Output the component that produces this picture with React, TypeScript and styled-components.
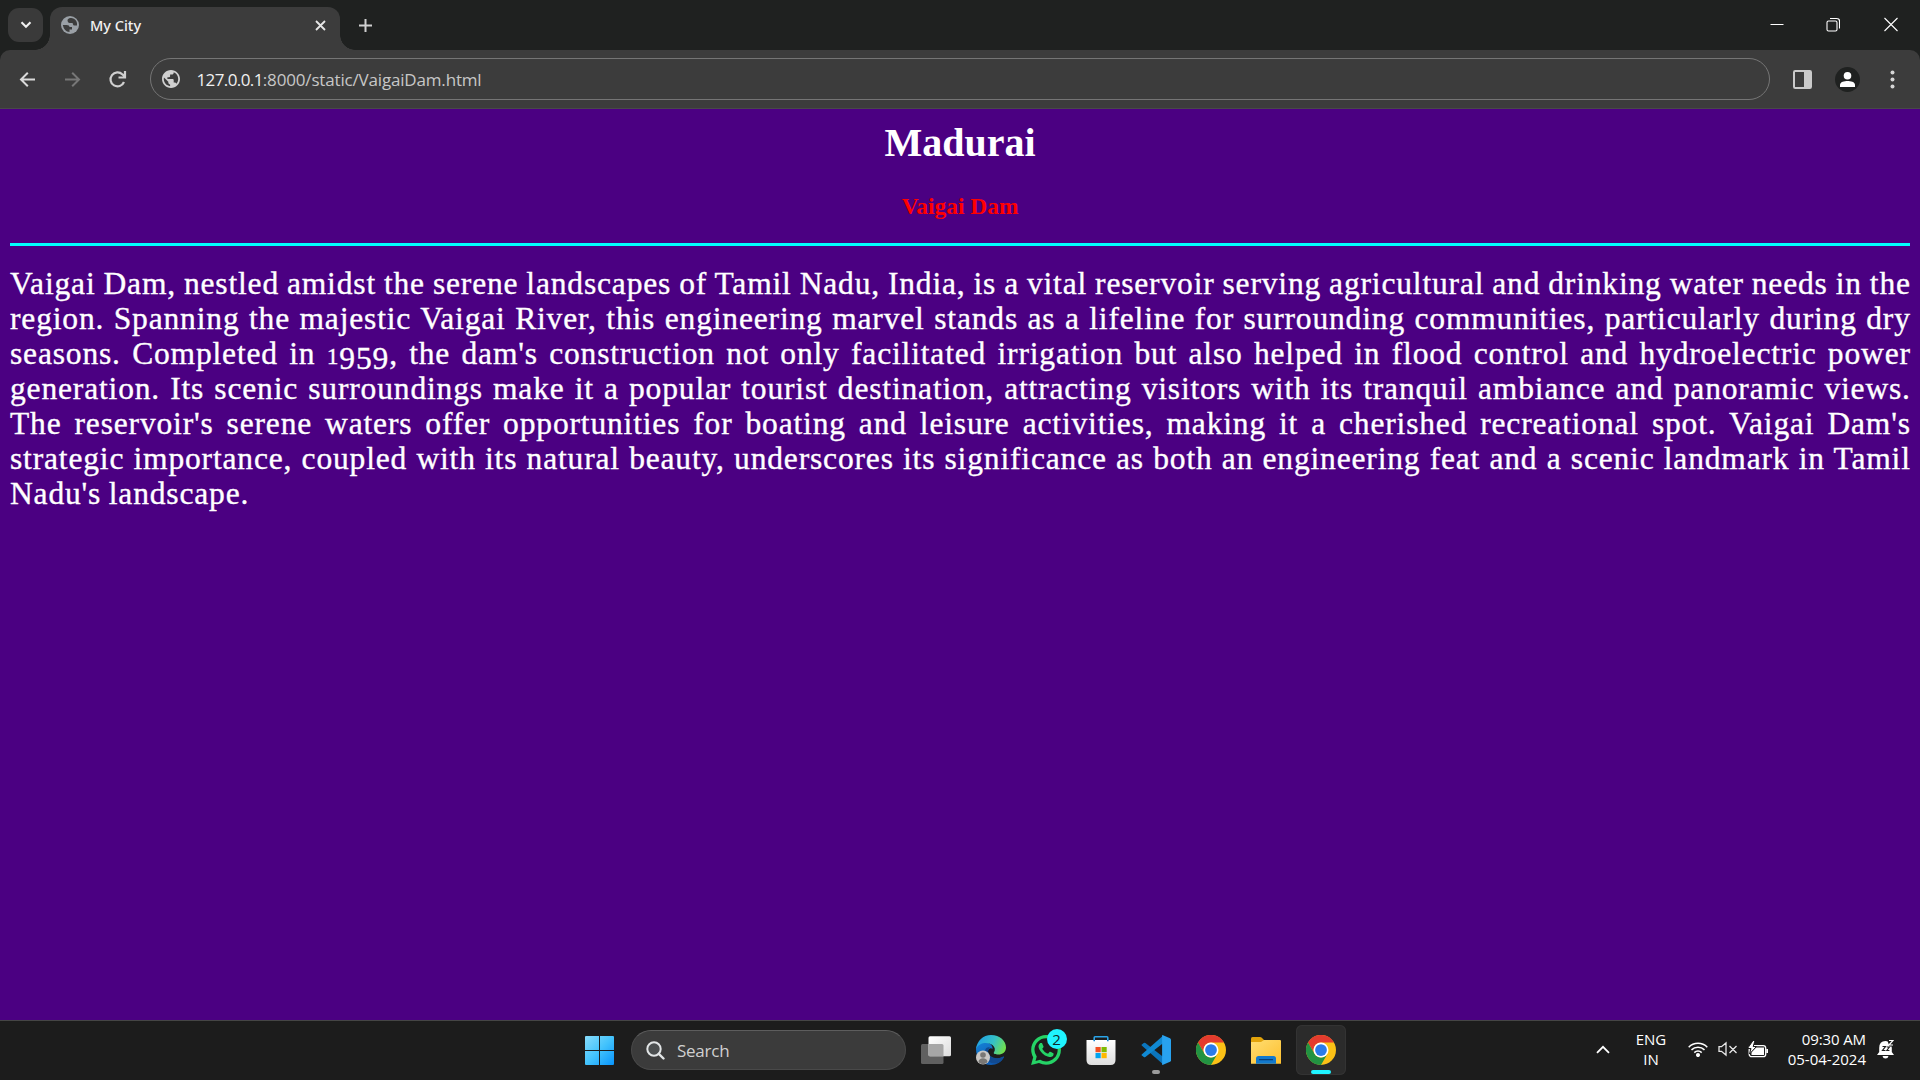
import React from "react";
import styled, { createGlobalStyle, css } from "styled-components";

const uiFont = `"Open Sans", "Noto Sans", sans-serif`;

const Global = createGlobalStyle`
  html, body { margin: 0; padding: 0; background: #4b0082; }
  * { box-sizing: border-box; }
`;

const Screen = styled.div`
  width: 1920px;
  height: 1080px;
  overflow: hidden;
  display: flex;
  flex-direction: column;
  background: #4b0082;
  font-family: ${uiFont};
  svg { display: block; flex: none; }
`;

/* ---------- Browser chrome ---------- */
const TabStrip = styled.header`
  height: 50px;
  flex: none;
  display: flex;
  background: #1f2120;
`;

const TabSearch = styled.button`
  width: 35px;
  height: 34px;
  margin: 8px 7px 0 8px;
  padding: 0;
  border: 0;
  border-radius: 11px;
  background: #3a3a3a;
  display: grid;
  place-items: center;
`;

const Tab = styled.div`
  position: relative;
  width: 290px;
  height: 43px;
  margin-top: 7px;
  padding: 0 12px 7px 11px;
  border-radius: 12px 12px 0 0;
  background: #3c3c3c;
  display: flex;
  align-items: center;
  color: #f2f2f2;
  &::before, &::after {
    content: "";
    position: absolute;
    bottom: 0;
    width: 15px;
    height: 15px;
  }
  &::before { left: -15px; background: radial-gradient(circle at 0 0, transparent 14.5px, #3c3c3c 15px); }
  &::after { right: -15px; background: radial-gradient(circle at 100% 0, transparent 14.5px, #3c3c3c 15px); }
`;

const TabTitle = styled.span`
  flex: 1;
  margin-left: 11px;
  font-family: "Noto Sans", "Open Sans", sans-serif;
  font-size: 14.5px;
  line-height: 20px;
  font-weight: 500;
`;

const NewTab = styled.div`
  width: 50px;
  display: grid;
  place-items: center;
`;

const Caption = styled.div`
  margin-left: auto;
  display: flex;
`;

const CaptionButton = styled.div<{ $w: number }>`
  width: ${(p) => p.$w}px;
  padding-top: 17px;
`;

const ToolbarBack = styled.div`
  flex: none;
  background: #1f2120;
`;

const Toolbar = styled.nav`
  height: 59px;
  border-bottom: 1px solid #494949;
  border-radius: 10px 10px 0 0;
  background: #3c3c3c;
  display: flex;
  align-items: center;
  padding: 1px 18px 0 15px;
`;

const NavIcons = styled.div`
  display: flex;
  gap: 20px;
  width: 135px;
`;

const Omnibox = styled.div`
  width: 1620px;
  height: 42px;
  border: 1px solid #757575;
  border-radius: 21px;
  display: flex;
  align-items: center;
  padding-left: 11px;
  margin-bottom: 1px;
`;

const Url = styled.span`
  margin: 2px 0 0 16.5px;
  font-size: 17px;
  line-height: 24px;
  letter-spacing: -0.17px;
  color: #c7c7c7;
  white-space: nowrap;
  b { font-weight: 400; letter-spacing: -0.6px; color: #f0f0f0; }
`;

const ToolbarRight = styled.div`
  margin-left: auto;
  display: flex;
  align-items: center;
`;

const Avatar = styled.div`
  width: 25px;
  height: 25px;
  margin: 0 27px 0 23px;
  border-radius: 50%;
  background: #1f2120;
  overflow: hidden;
`;

/* ---------- Page ---------- */
const Page = styled.main`
  flex: 1;
  padding: 0 10px;
  font-family: "Liberation Serif", serif;
  color: #fff;
`;

const City = styled.h1`
  margin: 11px 0 0;
  font-size: 40px;
  line-height: 46px;
  text-align: center;
`;

const Place = styled.h3`
  margin: 27px 0 0;
  font-size: 23.4px;
  line-height: 27px;
  text-align: center;
  color: #ff0000;
`;

const Rule = styled.hr`
  height: 3px;
  margin: 23px 0 20px;
  border: 0;
  background: #00ffff;
`;

const Story = styled.p`
  margin: 0;
  font-size: 31.5px;
  line-height: 35px;
  letter-spacing: 0.84px;
  word-spacing: -1.2px;
  -webkit-text-stroke: 0.35px #fff;
`;

const Line = styled.span<{ $last?: boolean }>`
  display: block;
  height: 35px;
  white-space: nowrap;
  margin-right: -0.8px;
  text-align: justify;
  text-align-last: ${(p) => (p.$last ? "left" : "justify")};
`;

/* Old-style figures: "1" at x-height, the others hanging below the baseline */
const SmallFigure = styled.span`
  font-size: 23.5px;
  line-height: 0;
`;

const HangingFigure = styled.span`
  line-height: 0;
  vertical-align: -4.5px;
`;

/* ---------- Taskbar ---------- */
const Taskbar = styled.footer`
  height: 60px;
  flex: none;
  border-top: 1px solid #454545;
  background: #1c1c1c;
  display: flex;
  align-items: center;
  padding: 0 26px 1px 585px;
  color: #fff;
`;

const SearchBox = styled.div`
  width: 275px;
  height: 40px;
  margin: 0 2px 0 17px;
  border-radius: 20px;
  border: 1px solid #494949;
  border-top-color: #5d5d5d;
  background: #3b3b3b;
  display: flex;
  align-items: center;
  padding-left: 14px;
  gap: 12px;
  font-size: 17px;
  line-height: 24px;
  color: #d0d0d0;
  letter-spacing: -0.25px;
`;

const SearchLabel = styled.span`
  padding-top: 1px;
`;

const TaskButton = styled.div<{ $active?: boolean }>`
  position: relative;
  width: 50px;
  height: 50px;
  margin: 0 2.5px;
  border-radius: 6px;
  display: grid;
  place-items: center;
  ${(p) => p.$active && css`background: #2b2b2b; box-shadow: inset 0 0 0 1px #333;`}
`;

const Marker = styled.i<{ $w: number; $c: string }>`
  position: absolute;
  bottom: 1px;
  left: calc(50% - ${(p) => p.$w / 2}px);
  width: ${(p) => p.$w}px;
  height: 4px;
  border-radius: 2px;
  background: ${(p) => p.$c};
`;

const Badge = styled.span`
  position: absolute;
  left: 26px;
  top: 4px;
  width: 20px;
  height: 20px;
  border-radius: 50%;
  background: #1ff4ff;
  color: #10282a;
  font-size: 15px;
  line-height: 20px;
  text-align: center;
`;

const Tray = styled.div`
  margin-left: auto;
  padding-bottom: 2px;
  display: flex;
  align-items: center;
`;

const Stack = styled.div<{ $w: number; $align: string }>`
  width: ${(p) => p.$w}px;
  text-align: ${(p) => p.$align};
  font-size: 15px;
  line-height: 20px;
  white-space: nowrap;
`;

const Clock = styled.div`
  letter-spacing: -0.1px;
`;

const Space = styled.div<{ $w: number }>`
  width: ${(p) => p.$w}px;
`;

/* ---------- Icons ---------- */
const Globe = () => (
  <svg width="18" height="18" viewBox="2 2 20 20" fill="#d0d0d0">
    <path d="M12 2C6.48 2 2 6.48 2 12s4.48 10 10 10 10-4.48 10-10S17.52 2 12 2zm-1 17.93c-3.95-.49-7-3.85-7-7.93 0-.62.08-1.21.21-1.79L9 15v1c0 1.1.9 2 2 2v1.93zm6.9-2.54c-.26-.81-1-1.39-1.9-1.39h-1v-3c0-.55-.45-1-1-1H8v-2h2c.55 0 1-.45 1-1V7h2c1.1 0 2-.9 2-2v-.41c2.93 1.19 5 4.06 5 7.41 0 2.08-.8 3.97-2.1 5.39z" />
  </svg>
);

const Favicon = () => (
  <svg width="18" height="18" viewBox="0 0 18 18">
    <circle cx="9" cy="9" r="9" fill="#9aa0a6" />
    <path d="M9.500 2Q6.500 2.500 6.500 4.500T8.500 7H11q1 0 1 1.200T13.500 9.500H16Q16.500 5 13 2.800Q11 1.700 9.500 2ZM1.800 9H5.500Q8.500 9 8.500 11H11v2.500H8.500V16Q3 15.500 1.800 9Z" fill="#3c3c3c" />
  </svg>
);

const Arrow = ({ color, flip }: { color: string; flip?: boolean }) => (
  <svg width="25" height="25" viewBox="0 0 25 25" fill="none" stroke={color} strokeWidth="2">
    <g transform={flip ? "translate(25 0) scale(-1 1)" : undefined}>
      <path d="M20 12.5H6.500M12.800 5.700 6 12.500l6.800 6.800" />
    </g>
  </svg>
);

const Chrome = () => (
  <svg width="30" height="30" viewBox="0 0 48 48">
    <circle cx="24" cy="24" r="24" fill="#fbc116" />
    <path d="M3.2 12A24 24 0 0 1 44.8 12H24a12 12 0 0 0-10.4 18Z" fill="#e33b2e" />
    <path d="M3.2 12A24 24 0 0 0 24 48l10.4-18A12 12 0 0 1 13.6 30Z" fill="#229342" />
    <circle cx="24" cy="24" r="12" fill="#fff" />
    <circle cx="24" cy="24" r="9.4" fill="#2a7bea" />
  </svg>
);

const Edge = () => (
  <svg width="30" height="30" viewBox="0 0 30 30">
    <defs>
      <linearGradient id="eTop" x1="0" y1="0.3" x2="1" y2="0.6">
        <stop offset="0" stopColor="#1f9fe6" />
        <stop offset="0.55" stopColor="#35c1c6" />
        <stop offset="1" stopColor="#72e04b" />
      </linearGradient>
      <linearGradient id="eLow" x1="0" y1="0" x2="0.7" y2="1">
        <stop offset="0" stopColor="#1583d8" />
        <stop offset="1" stopColor="#0d55ad" />
      </linearGradient>
    </defs>
    <path d="M0 14C1 8 6 6 11 7.500c4 1 6 4 5.500 6.500-1-1.500-4-1-4.500 2-.5 4 4 7.500 9 7.500 3 0 5-1.500 6.500-2 .5 0 .5.500.3 1C25.500 27 20.500 30 15 30 6 30 0 23 0 14Z" fill="url(#eLow)" />
    <path d="M9.500 14q-2.500 8 3 12.500 4 2.700 9.500 1.500 4-2 5.700-5.500.2-1-.7-.8C21 25 13 22.500 12 17q-.3-3 2-4.500-3-1-4.500 1.500Z" fill="#114a91" />
    <path d="M0 14C1 6 7 0 15 0c9 0 15 6 15 12.500 0 4.500-3.500 7-7.500 7-3.500 0-5.500-1-4.500-2.300 1.500-2.200 1-5.200-1.500-7.200C12 6.500 3 7 0 14Z" fill="url(#eTop)" />
    <circle cx="7" cy="22.500" r="7" fill="#c9c7c5" />
    <circle cx="7" cy="20" r="2.800" fill="#797775" />
    <path d="M2.500 27c0-5 9-5 9 0-2.500 2.800-6.500 2.800-9 0Z" fill="#797775" />
  </svg>
);

const WhatsApp = () => (
  <svg width="30" height="30" viewBox="0 0 24 24" fill="#25d366">
    <path d="M17.472 14.382c-.297-.149-1.758-.867-2.030-.967-.273-.099-.471-.148-.67.150-.197.297-.767.966-.940 1.164-.173.199-.347.223-.644.075-.297-.150-1.255-.463-2.390-1.475-.883-.788-1.480-1.761-1.653-2.059-.173-.297-.018-.458.130-.606.134-.133.298-.347.446-.520.149-.174.198-.298.298-.497.099-.198.050-.371-.025-.520-.075-.149-.669-1.612-.916-2.207-.242-.579-.487-.500-.669-.510-.173-.008-.371-.010-.570-.010-.198 0-.520.074-.792.372-.272.297-1.040 1.016-1.040 2.479 0 1.462 1.065 2.875 1.213 3.074.149.198 2.096 3.200 5.077 4.487.709.306 1.262.489 1.694.625.712.227 1.360.195 1.871.118.571-.085 1.758-.719 2.006-1.413.248-.694.248-1.289.173-1.413-.074-.124-.272-.198-.570-.347" />
    <path fillRule="evenodd" d="M12.050 0C5.495 0 .160 5.335.157 11.892c0 2.096.547 4.142 1.588 5.945L.057 24l6.305-1.654a11.882 11.882 0 0 0 5.683 1.448h.005c6.554 0 11.890-5.335 11.893-11.893A11.821 11.821 0 0 0 12.050 0zm0 2.600a9.280 9.280 0 0 1 9.280 9.300 9.300 9.300 0 0 1-9.300 9.280 9.280 9.280 0 0 1-4.720-1.290l-3.700.970.990-3.600a9.260 9.260 0 0 1-1.830-5.370A9.300 9.300 0 0 1 12.050 2.600z" />
  </svg>
);

const Store = () => (
  <svg width="30" height="30" viewBox="0 0 30 30">
    <defs>
      <linearGradient id="bag" x1="0" y1="0" x2="0" y2="1">
        <stop offset="0" stopColor="#fff" />
        <stop offset="1" stopColor="#dedede" />
      </linearGradient>
    </defs>
    <path d="M8.200 6V2.700Q8.200 1.800 9 1.800H21Q21.800 1.800 21.800 2.700V6" fill="none" stroke="#2aa4e8" strokeWidth="1.600" />
    <path d="M.5 5h29v20q0 5-5 5h-19q-5 0-5-5Z" fill="url(#bag)" />
    <path d="M8.200 5v1.300M21.800 5v1.300" stroke="#1485d1" strokeWidth="1.600" />
    <rect x="9.500" y="12" width="5.200" height="5.200" fill="#f25022" />
    <rect x="15.500" y="12" width="5.200" height="5.200" fill="#7fba00" />
    <rect x="9.500" y="18" width="5.200" height="5.200" fill="#00a4ef" />
    <rect x="15.500" y="18" width="5.200" height="5.200" fill="#ffb900" />
  </svg>
);

const VSCode = () => (
  <svg width="30" height="30" viewBox="0 0 30 30">
    <path d="M1.200 9.200 2.800 8q.8-.5 1.600.1L22 21.700V29.300L.7 10.500q-.6-.7.5-1.300Z" fill="#0b75bd" />
    <path d="M1.200 20.800 2.800 22q.8.500 1.600-.1L22 8.300V.7L.7 19.500q-.6.7.5 1.300Z" fill="#1089d3" />
    <path d="M21.500 0 29 3.200q1 .5 1 1.500v20.600q0 1-1 1.500L21.500 30q-.4-.2-.4-.8V.8q0-.6.4-.8Z" fill="#28a2ef" />
  </svg>
);

const Folder = () => (
  <svg width="30" height="30" viewBox="0 0 30 30">
    <defs>
      <linearGradient id="fold" x1="0" y1="0" x2="1" y2="1">
        <stop offset="0" stopColor="#ffdd72" />
        <stop offset="1" stopColor="#fdc02f" />
      </linearGradient>
    </defs>
    <path d="M0 3.500Q0 2 1.500 2H9q1 0 1.800.8L13.500 5.500V12H0Z" fill="#e2a30b" />
    <path d="M0 7H10l3-2H29q1 0 1 1V28.700H0Z" fill="url(#fold)" />
    <path d="M5 28.700V23.500Q5 21 7.500 21h15q2.500 0 2.500 2.500v5.200Z" fill="#1279cd" />
    <path d="M8.500 24.700h13" stroke="#083f78" strokeWidth="1.200" strokeLinecap="round" />
  </svg>
);

const TaskView = () => (
  <svg width="30" height="30" viewBox="0 0 30 30">
    <defs>
      <linearGradient id="tv" x1="0" y1="0" x2="1" y2="1">
        <stop offset="0" stopColor="#fff" />
        <stop offset="1" stopColor="#dcdcdc" />
      </linearGradient>
    </defs>
    <rect x="0" y="9" width="22.500" height="20" rx="1.500" fill="#606060" />
    <rect x="7.500" y="1.200" width="22.500" height="20" rx="1.500" fill="url(#tv)" />
    <path d="M7.500 9H21q1.500 0 1.500 1.500V21.200H9q-1.500 0-1.500-1.500Z" fill="#a6a6a6" />
  </svg>
);

const Windows = () => (
  <svg width="29" height="30" viewBox="0 -1 29 30">
    <defs>
      <linearGradient id="win" gradientUnits="userSpaceOnUse" x1="0" y1="0" x2="29" y2="29">
        <stop offset="0" stopColor="#88dcfb" />
        <stop offset="0.5" stopColor="#43c3fc" />
        <stop offset="1" stopColor="#0894fc" />
      </linearGradient>
    </defs>
    <path d="M1 0H14V14H0V1Q0 0 1 0ZM15 0H28q1 0 1 1V14H15ZM0 15H14V29H1q-1 0-1-1ZM15 15H29V28q0 1-1 1H15Z" fill="url(#win)" />
  </svg>
);

const lines = [
  "Vaigai Dam, nestled amidst the serene landscapes of Tamil Nadu, India, is a vital reservoir serving agricultural and drinking water needs in the",
  "region. Spanning the majestic Vaigai River, this engineering marvel stands as a lifeline for surrounding communities, particularly during dry",
  <>seasons. Completed in <SmallFigure>1</SmallFigure><HangingFigure>959</HangingFigure>, the dam's construction not only facilitated irrigation but also helped in flood control and hydroelectric power</>,
  "generation. Its scenic surroundings make it a popular tourist destination, attracting visitors with its tranquil ambiance and panoramic views.",
  "The reservoir's serene waters offer opportunities for boating and leisure activities, making it a cherished recreational spot. Vaigai Dam's",
  "strategic importance, coupled with its natural beauty, underscores its significance as both an engineering feat and a scenic landmark in Tamil",
  "Nadu's landscape.",
];

export default function App() {
  return (
    <>
      <Global />
      <Screen>
        <TabStrip>
          <TabSearch>
            <svg width="12" height="8" viewBox="0 0 12 8" fill="none" stroke="#f0f0f0" strokeWidth="2.100"><path d="m1.500 1.200 4.500 4.500 4.500-4.500" /></svg>
          </TabSearch>
          <Tab>
            <Favicon />
            <TabTitle>My City</TabTitle>
            <svg width="15" height="15" viewBox="0 0 15 15" stroke="#e6e6e6" strokeWidth="1.800"><path d="m3 3 9 9m0-9-9 9" /></svg>
          </Tab>
          <NewTab>
            <svg width="13" height="13" viewBox="0 0 13 13" stroke="#d0d0d0" strokeWidth="2"><path d="M6.500 0v13M0 6.500h13" /></svg>
          </NewTab>
          <Caption>
            <CaptionButton $w={56}><svg width="14" height="15" viewBox="0 0 14 15" stroke="#fff" strokeWidth="1"><path d="M.5 7.500h13" /></svg></CaptionButton>
            <CaptionButton $w={57}>
              <svg width="14" height="15" viewBox="0 0 14 15" fill="none" stroke="#fff" strokeWidth="1.100">
                <rect x="1" y="4" width="10" height="10" rx="1.500" />
                <path d="M4 1.500h6.500q3 0 3 2.500v7.500" />
              </svg>
            </CaptionButton>
            <CaptionButton $w={37}><svg width="15" height="15" viewBox="0 0 15 15" stroke="#fff" strokeWidth="1.100"><path d="m1.500 1 13 13m0-13-13 13" /></svg></CaptionButton>
          </Caption>
        </TabStrip>
        <ToolbarBack>
          <Toolbar>
            <NavIcons>
              <Arrow color="#dadada" />
              <Arrow color="#777" flip />
              <svg width="25" height="25" viewBox="0 0 25 25" fill="none" stroke="#d0d0d0" strokeWidth="2.200">
                <path d="M19 15a7 7 0 1 1-1.500-7.600L20 9.700M20 4v6.500h-6.500" />
              </svg>
            </NavIcons>
            <Omnibox>
              <Globe />
              <Url><b>127.0.0.1</b>:8000/static/VaigaiDam.html</Url>
            </Omnibox>
            <ToolbarRight>
              <svg width="19" height="19" viewBox="0 0 19 19"><rect x="1" y="1" width="17" height="17" rx="1.200" fill="none" stroke="#cacaca" strokeWidth="2" /><path d="M11 1h7v17h-7z" fill="#cacaca" /></svg>
              <Avatar>
                <svg width="25" height="25" viewBox="0 0 25 25" fill="#fff"><circle cx="12.500" cy="8.700" r="3.800" /><path d="M5 20v-2c0-3.200 4.500-4 7.500-4s7.500.8 7.500 4v2Z" /></svg>
              </Avatar>
              <svg width="15" height="19" viewBox="0 0 15 19" fill="#d6d6d6"><circle cx="5.500" cy="2.500" r="2" /><circle cx="5.500" cy="9.500" r="2" /><circle cx="5.500" cy="16.500" r="2" /></svg>
            </ToolbarRight>
          </Toolbar>
        </ToolbarBack>

        <Page>
          <City>Madurai</City>
          <Place>Vaigai Dam</Place>
          <Rule />
          <Story>
            {lines.map((text, i) => (
              <Line key={i} $last={i === lines.length - 1}>{text}</Line>
            ))}
          </Story>
        </Page>

        <Taskbar>
          <Windows />
          <SearchBox>
            <svg width="19" height="19" viewBox="0 0 19 19" fill="#4c4f50" stroke="#e2e5e6" strokeWidth="2"><circle cx="8" cy="8" r="6.700" /><path d="m12.800 12.800 4.700 4.700" strokeWidth="2.400" strokeLinecap="round" /></svg>
            <SearchLabel>Search</SearchLabel>
          </SearchBox>
          <TaskButton><TaskView /></TaskButton>
          <TaskButton><Edge /></TaskButton>
          <TaskButton><WhatsApp /><Badge>2</Badge></TaskButton>
          <TaskButton><Store /></TaskButton>
          <TaskButton><VSCode /><Marker $w={8} $c="#9a9a9a" /></TaskButton>
          <TaskButton><Chrome /></TaskButton>
          <TaskButton><Folder /></TaskButton>
          <TaskButton $active><Chrome /><Marker $w={20} $c="#1ff4ff" /></TaskButton>
          <Tray>
            <svg width="14" height="9" viewBox="0 0 14 9" fill="none" stroke="#fff" strokeWidth="1.800"><path d="m1 7.800 6-6 6 6" /></svg>
            <Space $w={21} />
            <Stack $w={40} $align="center">ENG<br />IN</Stack>
            <Space $w={17} />
            <svg width="20" height="16" viewBox="0 0 20 16" fill="none" stroke="#fff" strokeWidth="1.500">
              <path d="M.7 6.200a13 13 0 0 1 18.600 0M3.500 8.900a9.200 9.200 0 0 1 13 0M6.300 11.600a5.300 5.300 0 0 1 7.400 0" />
              <circle cx="10" cy="14" r="1.300" fill="#fff" />
            </svg>
            <Space $w={10} />
            <svg width="20" height="16" viewBox="0 0 20 16" fill="none" stroke="#e8e8e8" strokeWidth="1.300">
              <path d="M1 5.700h2.500L8 2v12l-4.500-3.700H1ZM11.500 5l7 7m0-7-7 7" />
            </svg>
            <Space $w={10} />
            <svg width="21" height="17" viewBox="0 0 21 17">
              <rect x="1.200" y="4.700" width="16.500" height="11" rx="2.500" fill="none" stroke="#fff" strokeWidth="1.300" />
              <path d="M8 6.500h8v7.500H3.500V11Z" fill="#fff" />
              <path d="M18.300 8h1.700v4h-1.700z" fill="#fff" />
              <path d="M5-.5-.5 7.500H3L1.500 13 8.500 5.500H5.200L7-.5Z" fill="#fff" stroke="#1c1c1c" strokeWidth="1" />
            </svg>
            <Space $w={13} />
            <Stack $w={84} $align="right"><Clock>09:30 AM</Clock>05-04-2024</Stack>
            <Space $w={11} />
            <svg width="17" height="20" viewBox="0 0 17 20">
              <path d="M2.200 9q0-7 6.300-7t6.300 7v4l2.200 3H0l2.200-3ZM5.500 17h6q-.5 2.500-3 2.500T5.500 17Z" fill="#fff" />
              <path d="M5.500 7.500h3l-3 4h3" fill="none" stroke="#1c1c1c" strokeWidth="1.200" />
              <path d="M10 .5h7v7h-4.500z" fill="#1c1c1c" />
              <path d="M12 1.500h4L12 6h4" fill="none" stroke="#fff" strokeWidth="1.200" />
              <path d="M9.800 8h2.600l-2.600 3.500h2.600" fill="none" stroke="#1c1c1c" strokeWidth="1.100" />
            </svg>
          </Tray>
        </Taskbar>
      </Screen>
    </>
  );
}
